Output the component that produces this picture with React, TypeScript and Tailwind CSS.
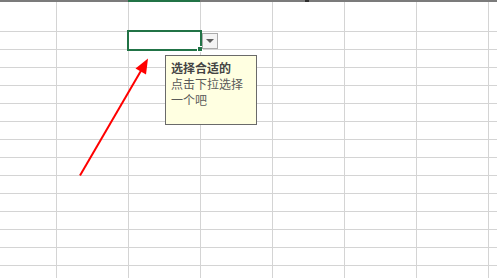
import React from 'react';

const COLS = [57, 72, 72, 72, 72, 72, 72, 72];
const ROWS = [30, 18, 18, 18, 18, 18, 18, 18, 18, 18, 18, 18, 18, 18, 18];

const Sheet = () => {
  return (
    <div className="flex flex-col">
      {ROWS.map((h, r) => (
        <div key={r} className="flex border-b border-[#d4d4d4]" style={{ height: h }}>
          {COLS.map((w, c) => (
            <div
              key={c}
              className="shrink-0 border-r border-[#d4d4d4]"
              style={{ width: w }}
            />
          ))}
        </div>
      ))}
    </div>
  );
};

const App = () => {
  return (
    <div className="relative w-[497px] h-[278px] overflow-hidden bg-white font-['Noto_Sans_CJK_SC',sans-serif]">
      {/* header bottom edge */}
      <div className="flex h-[2px] bg-[#7b7b7b]">
        <div className="w-[128px] shrink-0" />
        <div className="w-[72px] shrink-0 bg-[#217346]" />
        <div className="w-[105px] shrink-0" />
        <div className="w-[4px] shrink-0 bg-[#2e2e2e]" />
      </div>
      <Sheet />

      {/* selected cell */}
      <div className="absolute left-[127px] top-[30px] w-[75px] h-[21px] border-2 border-[#217346]" />
      <div className="absolute left-[197px] top-[46px] w-[6px] h-[6px] bg-[#217346] border border-white" />

      {/* dropdown button */}
      <div className="absolute left-[202px] top-[33px] w-[16px] h-[16px] border border-[#ababab] bg-[#f4f4f4] flex items-center justify-center">
        <div className="w-0 h-0 border-l-[4px] border-r-[4px] border-t-[4px] border-l-transparent border-r-transparent border-t-[#5f5f5f]" />
      </div>

      {/* input message */}
      <div className="absolute left-[165px] top-[55px] w-[92px] h-[70px] border border-[#6a6a6a] bg-[#ffffe1] px-[5px] pt-[4px] text-[12px] leading-[16px]">
        <div className="font-bold text-[#444444]">选择合适的</div>
        <div className="text-[#5a5a5a]">点击下拉选择</div>
        <div className="text-[#5a5a5a]">一个吧</div>
      </div>

      {/* annotation arrow */}
      <svg className="absolute left-0 top-0" width="497" height="278" viewBox="0 0 497 278">
        <line x1="80" y1="175.5" x2="142" y2="69" stroke="#ff0000" strokeWidth="2" />
        <polygon points="148,58.5 146,74.5 135.5,68.5" fill="#ff0000" />
      </svg>
    </div>
  );
};

export default App;
